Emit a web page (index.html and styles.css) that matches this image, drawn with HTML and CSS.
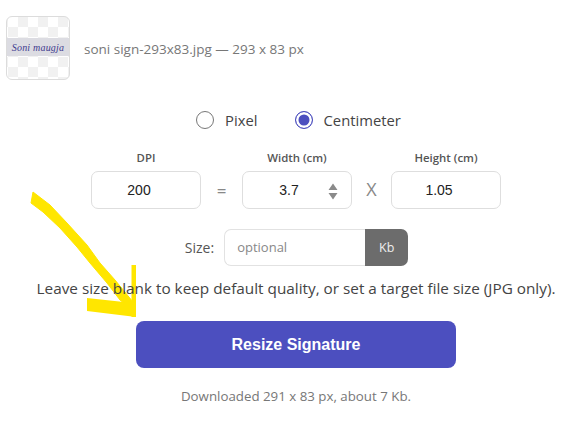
FILE: index.html
```html
<!DOCTYPE html>
<html lang="en">
<head>
<meta charset="utf-8">
<title>Resize Signature</title>
<link rel="stylesheet" href="styles.css">
</head>
<body>
<svg class="arrow" width="585" height="433" viewBox="0 0 585 433" fill="none">
  <path d="M33 192 50 205 67 223 87 245 100 263 115 280 133 302 130 308 120 300 107 283 90 263 77 247 60 228 43 212 31 203Z" fill="#ffe600" stroke="#ffe600" stroke-linejoin="round"/>
  <path d="M131.500 265H136V317H131.500Z" fill="#ffe600"/>
  <path d="M87 298 133 303 136 317 87 311Z" fill="#ffe600"/>
</svg>
<main class="page">
  <div class="file-row">
    <div class="thumb"><div class="thumb-band"><span class="thumb-sign">Soni maugja</span></div></div>
    <span class="file-name">soni sign-293x83.jpg — 293 x 83 px</span>
  </div>

  <div class="unit-row">
    <label class="radio"><span class="radio-dot"></span>Pixel</label>
    <label class="radio"><span class="radio-dot is-on"></span>Centimeter</label>
  </div>

  <div class="dims">
    <div class="field">
      <span class="field-label">DPI</span>
      <div class="box">200</div>
    </div>
    <span class="sep sep-eq">=</span>
    <div class="field">
      <span class="field-label">Width (cm)</span>
      <div class="box box-spin">3.7
        <svg class="spin" width="10" height="17" viewBox="0 0 10 17"><path d="M5 0.5 9.500 7H.5zM5 16.500 .5 10h9z" fill="#8a8a8a"/></svg>
      </div>
    </div>
    <span class="sep sep-x">X</span>
    <div class="field">
      <span class="field-label">Height (cm)</span>
      <div class="box">1.05</div>
    </div>
  </div>

  <div class="size-row">
    <span class="size-label">Size:</span>
    <div class="size-group">
      <span class="size-input">optional</span>
      <span class="size-unit">Kb</span>
    </div>
  </div>

  <p class="help">Leave size blank to keep default quality, or set a target file size (JPG only).</p>

  <button class="submit" type="button">Resize Signature</button>

  <p class="note">Downloaded 291 x 83 px, about 7 Kb.</p>
</main>
</body>
</html>
```

FILE: styles.css
```css
* { box-sizing: border-box; }

html, body { margin: 0; padding: 0; background: #fff; }

body {
  width: 585px;
  height: 433px;
  overflow: hidden;
  position: relative;
  font-family: "Open Sans", "Noto Sans", sans-serif;
  color: #444;
}

.page {
  position: relative;
  display: flex;
  flex-direction: column;
  align-items: center;
  width: 592px;
  padding-top: 16px;
}

.file-row {
  align-self: flex-start;
  display: flex;
  align-items: center;
  gap: 14px;
  padding-left: 6px;
  height: 64px;
}

.thumb {
  width: 64px;
  height: 64px;
  border: 1px solid #dcdcdc;
  border-radius: 6px;
  overflow: hidden;
  display: flex;
  align-items: center;
  background-color: #fff;
  background-image: conic-gradient(#f1f1f1 25%, #fff 0 50%, #f1f1f1 0 75%, #fff 0);
  background-size: 20px 20px;
  background-position: 1px 0;
}

.thumb-band {
  width: 100%;
  height: 18px;
  margin-top: -2px;
  background: #dcdce2;
  display: flex;
  align-items: center;
  justify-content: center;
}

.thumb-sign {
  font-family: "Liberation Serif", serif;
  font-style: italic;
  font-size: 10px;
  letter-spacing: 0.2px;
  white-space: nowrap;
  color: #3f3b8f;
}

.file-name {
  font-size: 13.5px;
  color: #777;
  margin-top: 1px;
}

.unit-row {
  display: flex;
  gap: 37px;
  margin-top: 29px;
  height: 22px;
  margin-left: 5px;
}

.radio {
  display: flex;
  align-items: center;
  gap: 11px;
  font-size: 14.8px;
  color: #444;
}

.radio-dot {
  width: 18px;
  height: 18px;
  border-radius: 50%;
  border: 1px solid #777;
  background: #fff;
}

.radio-dot.is-on {
  border-color: #4c4fbf;
  background: #4c4fbf;
  box-shadow: inset 0 0 0 2.5px #fff;
}

.dims {
  display: flex;
  align-items: flex-end;
  margin-top: 19px;
}

.field {
  width: 110px;
  display: flex;
  flex-direction: column;
  align-items: center;
  gap: 6px;
}

.field-label {
  font-size: 11.4px;
  line-height: 15px;
  font-weight: 600;
  color: #555;
}

.box {
  position: relative;
  width: 110px;
  height: 38px;
  border: 1px solid #dedede;
  border-radius: 7px;
  display: flex;
  align-items: center;
  justify-content: center;
  font-family: "Liberation Sans", sans-serif;
  font-size: 14px;
  color: #222;
  padding-right: 14px;
}

.box-spin { padding-right: 16px; }

.spin {
  position: absolute;
  right: 13px;
  top: 11px;
}

.sep {
  height: 38px;
  display: flex;
  align-items: center;
  justify-content: center;
  color: #888;
}

.sep-eq { width: 41px; font-size: 17px; }
.sep-x { width: 39px; font-size: 18px; padding-bottom: 3px; }

.size-row {
  display: flex;
  align-items: center;
  gap: 10px;
  margin-top: 20px;
  margin-left: 1px;
}

.size-label {
  font-size: 14px;
  color: #555;
}

.size-group {
  display: flex;
  width: 184px;
  height: 37px;
}

.size-input {
  flex: 1;
  display: flex;
  align-items: center;
  padding-left: 12px;
  padding-bottom: 2px;
  border: 1px solid #e2e2e2;
  border-right: 0;
  border-radius: 7px 0 0 7px;
  font-size: 13px;
  color: #888;
}

.size-unit {
  width: 43px;
  display: flex;
  align-items: center;
  justify-content: center;
  background: #6c6c6c;
  border-radius: 0 7px 7px 0;
  color: #eee;
  font-size: 12.5px;
}

.help {
  margin: 12px 0 0;
  font-size: 15.32px;
  line-height: 20px;
  color: #444;
  white-space: nowrap;
}

.submit {
  width: 320px;
  height: 47px;
  margin-top: 23px;
  border: 0;
  border-radius: 8px;
  background: #4c4fbf;
  color: #fff;
  font-family: "Liberation Sans", sans-serif;
  font-size: 16px;
  font-weight: 700;
}

.note {
  margin: 19px 0 0;
  font-size: 13.3px;
  line-height: 18px;
  color: #777;
}

.arrow {
  position: absolute;
  left: 0;
  top: 0;
}
```
